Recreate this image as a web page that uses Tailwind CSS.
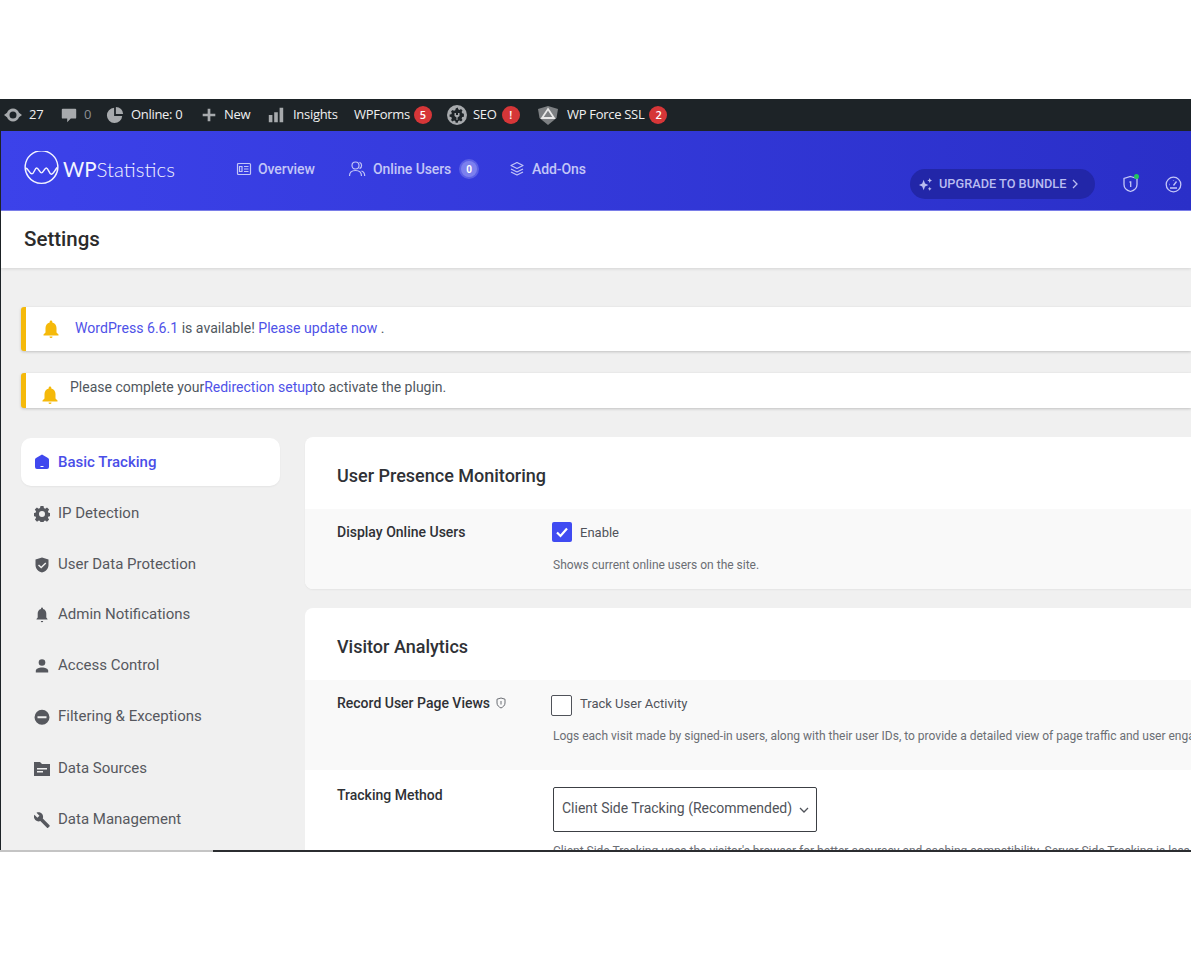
<!DOCTYPE html>
<html lang="en">
<head>
    <meta charset="UTF-8">
    <meta name="viewport" content="width=device-width, initial-scale=1.0">
    <title>WP Statistics - Settings</title>
    <script src="https://cdn.jsdelivr.net/npm/@tailwindcss/browser@4"></script>
</head>
<body class="bg-white h-[960px] overflow-hidden font-['Roboto',sans-serif]">

<div class="pt-[99px] w-[1191px]">
    <div class="h-[751px] overflow-hidden flex flex-col">

        <!-- Admin bar -->
        <div class="h-[32px] shrink-0 bg-[#1d2327] flex items-center text-[13px] text-[#f0f0f1] font-['Open_Sans',sans-serif] tracking-[-0.3px] whitespace-nowrap">
            <div class="flex items-center ml-[3px] w-[57px]">
                <svg class="w-[20px] h-[20px] text-[#a7aaad]" viewBox="0 0 20 20" fill="currentColor"><path fill-rule="evenodd" d="M10 3.500c2.800 0 5.100 1.700 6 4.200l3 2.300-3 2.300c-.9 2.500-3.200 4.200-6 4.200s-5.100-1.700-6-4.200L1 10l3-2.300c.9-2.500 3.200-4.200 6-4.200zm0 3a3.500 3.500 0 1 0 0 7 3.500 3.500 0 0 0 0-7z"/></svg>
                <span class="ml-[6px]">27</span>
            </div>
            <div class="flex items-center w-[46px]">
                <svg class="w-[18px] h-[18px] text-[#a7aaad]" viewBox="0 0 20 20" fill="currentColor"><path d="M3 3h14a1 1 0 0 1 1 1v9a1 1 0 0 1-1 1h-5l-4 4v-4H3a1 1 0 0 1-1-1V4a1 1 0 0 1 1-1z"/></svg>
                <span class="ml-[6px] text-[#8c8f94]">0</span>
            </div>
            <div class="flex items-center w-[94px]">
                <svg class="w-[18px] h-[18px] text-[#a7aaad]" viewBox="0 0 20 20" fill="currentColor"><path d="M9 2v9h9a8.500 8.500 0 1 1-9-9z"/><path d="M11 1a8 8 0 0 1 8 8h-8z"/></svg>
                <span class="ml-[7px]">Online: 0</span>
            </div>
            <div class="flex items-center w-[67px]">
                <svg class="w-[18px] h-[18px] text-[#a7aaad]" viewBox="0 0 20 20" fill="currentColor"><path d="M8.500 3h3v5.500H17v3h-5.500V17h-3v-5.500H3v-3h5.500z"/></svg>
                <span class="ml-[6px]">New</span>
            </div>
            <div class="flex items-center w-[87px]">
                <svg class="w-[18px] h-[18px] text-[#a7aaad]" viewBox="0 0 20 20" fill="currentColor"><path d="M2 10h4v8H2zM8 7h4v11H8zM14 2h4v16h-4z"/></svg>
                <span class="ml-[8px]">Insights</span>
            </div>
            <div class="flex items-center w-[93px]">
                <span>WPForms</span>
                <span class="ml-[4px] w-[18px] h-[18px] rounded-full bg-[#d63638] text-white text-[11px] font-semibold flex items-center justify-center">5</span>
            </div>
            <div class="flex items-center w-[90px]">
                <svg class="w-[20px] h-[20px] text-[#a7aaad]" viewBox="0 0 20 20" fill="currentColor"><path fill-rule="evenodd" d="M10 0a10 10 0 1 1 0 20 10 10 0 0 1 0-20zm-1.300 3.500-.4 1.700-1.300.6-1.500-.9-1.500 1.500.9 1.500-.6 1.300-1.700.4v2.100l1.700.4.6 1.300-.9 1.500 1.500 1.500 1.500-.9 1.300.6.4 1.700h2.100l.4-1.700 1.300-.6 1.500.9 1.500-1.500-.9-1.500.6-1.300 1.700-.4V8.700l-1.700-.4-.6-1.300.9-1.500-1.500-1.500-1.500.9-1.300-.6-.4-1.700zM7.500 8h1.500v2h2V8h1.500v3l-2 1.500V15h-1v-2.500l-2-1.500z"/></svg>
                <span class="ml-[6px]">SEO</span>
                <span class="ml-[5px] w-[18px] h-[18px] rounded-full bg-[#d63638] text-white text-[11px] font-semibold flex items-center justify-center">!</span>
            </div>
            <div class="flex items-center">
                <svg class="w-[22px] h-[22px]" viewBox="0 0 22 22"><path d="M1 5l10-3 10 3-1.500 9L11 21l-8.500-7z" fill="#7d8083"/><path d="M11 5l6 9H5z" fill="none" stroke="#e8e8e8" stroke-width="1.800"/></svg>
                <span class="ml-[8px]">WP Force SSL</span>
                <span class="ml-[5px] w-[18px] h-[18px] rounded-full bg-[#d63638] text-white text-[11px] font-semibold flex items-center justify-center">2</span>
            </div>
        </div>

        <div class="flex-1 flex flex-col border-l border-[#1d2327] min-h-0 bg-[#f0f0f0]">

            <!-- Plugin header -->
            <div class="h-[80px] shrink-0 bg-gradient-to-r from-[#3c42ea] to-[#2a2fc8] border-b border-[#7a7de8] relative flex text-[#c3c6f7]">
                <div class="flex items-center h-[76px] ml-[23px] w-[211px]">
                    <svg class="w-[35px] h-[35px] -mt-[1px]" viewBox="0 0 36 36" fill="none" stroke="#f3f4ff" stroke-width="1.500"><path d="M4.500 26.500A16.800 16.800 0 1 1 31.500 26.500M4.500 26.500A16.800 16.800 0 0 0 31.500 26.500"/><path d="M1.500 17.500c3 0 4 6 6.500 6s3-6 5-6 3 5 5 5 3-5 5-5 3 6.500 5 6.500 3-3 6-7"/></svg>
                    <span class="ml-[4px] text-[20.500px] font-['Lato',sans-serif] font-light text-[#f3f4ff] leading-none"><span class="font-normal">WP</span>Statistics</span>
                </div>
                <div class="flex items-center h-[76px] text-[14px] font-medium tracking-[-0.1px]">
                    <div class="flex items-center w-[113px]">
                        <svg class="w-[16px] h-[16px] ml-[1px]" viewBox="0 0 16 16" fill="none" stroke="currentColor" stroke-width="1.200"><rect x="1.500" y="2.500" width="13" height="11" rx="1"/><path d="M3.500 5.500h2.500v5H3.500zM8 5.500h4.500M8 8h4.500M8 10.500h4.500"/></svg>
                        <span class="ml-[6px]">Overview</span>
                    </div>
                    <div class="flex items-center w-[161px]">
                        <svg class="w-[18px] h-[18px]" viewBox="0 0 18 18" fill="none" stroke="currentColor" stroke-width="1.200"><circle cx="7.500" cy="5.500" r="3.500"/><path d="M1.500 16c0-3.500 2.500-5.500 6-5.500s6 2 6 5.500M11.500 2.200a3.500 3.500 0 0 1 0 6.400M13.500 11c2 .6 3.200 2.500 3.200 5"/></svg>
                        <span class="ml-[7px]">Online Users</span>
                        <span class="ml-[10px] w-[16px] h-[16px] rounded-full bg-[#7c80ee] ring-2 ring-[#5a5fe6] text-white text-[10px] font-bold flex items-center justify-center">0</span>
                    </div>
                    <div class="flex items-center">
                        <svg class="w-[16px] h-[16px]" viewBox="0 0 16 16" fill="none" stroke="currentColor" stroke-width="1.200" stroke-linejoin="round"><path d="M8 1.500l6 3-6 3-6-3zM2 8l6 3 6-3M2 11l6 3 6-3"/></svg>
                        <span class="ml-[7px]">Add-Ons</span>
                    </div>
                </div>
                <div class="ml-auto flex items-start pt-[38px] pr-[9px]">
                    <div class="w-[185px] h-[30px] rounded-full bg-[#2226a8] flex items-center pl-[8px] text-[12.750px] font-medium text-[#b9bcf0] whitespace-nowrap">
                        <svg class="w-[15px] h-[15px]" viewBox="0 0 16 16" fill="currentColor"><path d="M6 3l1.500 4L11 8.500 7.500 10 6 14l-1.500-4L1 8.500 4.500 7zM12.500 1l.8 2 1.700.8-1.700.7-.8 2-.8-2-1.700-.7 1.700-.8zM12.500 10.500l.7 1.500 1.300.6-1.300.6-.7 1.500-.7-1.500-1.300-.6 1.300-.6z"/></svg>
                        <span class="ml-[6px]">UPGRADE TO BUNDLE</span>
                        <svg class="w-[10px] h-[10px] ml-[4px]" viewBox="0 0 10 10" fill="none" stroke="currentColor" stroke-width="1.300"><path d="M3 1l4 4-4 4"/></svg>
                    </div>
                    <div class="relative ml-[27px] mt-[6px]">
                        <svg class="w-[17px] h-[18px] text-[#c3c6f7]" viewBox="0 0 17 18" fill="none" stroke="currentColor" stroke-width="1.300"><path d="M8.500 1.500L15 3.500v6c0 3.500-3 6-6.500 7-3.500-1-6.500-3.500-6.500-7v-6z"/><path d="M7.500 7h1.200v5"/></svg>
                        <span class="absolute -top-[1px] right-[0px] w-[5px] h-[5px] rounded-full bg-[#22c55e]"></span>
                    </div>
                    <svg class="ml-[26px] mt-[7px] w-[17px] h-[17px] text-[#c3c6f7]" viewBox="0 0 17 17" fill="none" stroke="currentColor" stroke-width="1.300"><circle cx="8.500" cy="8.500" r="7.300"/><path d="M8.500 9.500l3-4M4.500 8.500h.5M8.500 4.500v.5M12 12h-7"/></svg>
                </div>
            </div>

            <!-- Page title -->
            <div class="h-[57px] shrink-0 bg-white shadow-[0_1px_3px_rgba(0,0,0,0.12)] flex items-center pl-[23px] pb-[1px] text-[20.500px] font-medium text-[#2b2b2b]">Settings</div>

            <!-- Notices -->
            <div class="pl-[20px] pt-[39px] shrink-0 text-[14px] text-[#50575e]">
                <div class="h-[44px] bg-white border-l-[5px] border-[#f5b90a] rounded-l-[3px] shadow-[0_1px_3px_rgba(0,0,0,0.2)] flex items-center">
                    <svg class="w-[20px] h-[20px] ml-[15px]" viewBox="0 0 20 20" fill="#f5b90a"><path d="M10 1.500a1.300 1.300 0 0 1 1.300 1.300v.6C14 4 15.500 6.300 15.500 9v4.500l2 2v1h-15v-1l2-2V9c0-2.700 1.500-5 4.200-5.600v-.6A1.300 1.300 0 0 1 10 1.500zM8.500 17.500h3a1.500 1.500 0 0 1-3 0z"/></svg>
                    <div class="ml-[14px] pb-[1px] text-[14.100px]"><span class="text-[#4f52e8]">WordPress 6.6.1</span> is available! <span class="text-[#4f52e8]">Please update now</span> .</div>
                </div>
                <div class="h-[35px] mt-[22px] bg-white border-l-[5px] border-[#f5b90a] rounded-l-[3px] shadow-[0_1px_3px_rgba(0,0,0,0.2)] flex">
                    <svg class="w-[20px] h-[20px] ml-[14px] mt-[12px]" viewBox="0 0 20 20" fill="#f5b90a"><path d="M10 1.500a1.300 1.300 0 0 1 1.300 1.300v.6C14 4 15.500 6.300 15.500 9v4.500l2 2v1h-15v-1l2-2V9c0-2.700 1.500-5 4.200-5.600v-.6A1.300 1.300 0 0 1 10 1.500zM8.500 17.500h3a1.500 1.500 0 0 1-3 0z"/></svg>
                    <div class="ml-[10px] mt-[4px]">Please complete your<span class="text-[#4f52e8]">Redirection setup</span>to activate the plugin.</div>
                </div>
            </div>

            <!-- Settings body -->
            <div class="flex pl-[20px] pt-[29px] min-h-0 flex-1">
                <div class="w-[259px] shrink-0 text-[15px] font-normal text-[#56585e]">
                    <div class="h-[48px] rounded-[10px] bg-white shadow-[0_1px_2px_rgba(0,0,0,0.05)] flex items-center pl-[13px] text-[#4a4ee8] font-medium mt-[1px]">
                        <svg class="w-[16px] h-[16px]" viewBox="0 0 16 16" fill="#4048ee"><path d="M8 .5l6 3.500a2 2 0 0 1 1 1.700V13a2 2 0 0 1-2 2H3a2 2 0 0 1-2-2V5.700A2 2 0 0 1 2 4zM6.500 12v1h3v-1z" fill-rule="evenodd"/></svg>
                        <span class="ml-[8px]">Basic Tracking</span>
                    </div>
                    <div class="h-[51px] flex items-center pl-[13px] mt-[2px]">
                        <svg class="w-[16px] h-[16px]" viewBox="0 0 16 16" fill="#56585e"><path fill-rule="evenodd" d="M6.500 0h3l.4 2.100 1.300.6 1.800-1.200 2.100 2.100-1.200 1.800.6 1.300 2 .4v3l-2 .4-.6 1.300 1.200 1.800-2.100 2.100-1.800-1.200-1.300.6-.4 2h-3l-.4-2-1.300-.6-1.800 1.200-2.100-2.100 1.200-1.800-.6-1.300-2-.4v-3l2-.4.6-1.300L.8 3.600l2.100-2.100 1.800 1.200 1.300-.6zM8 5a3 3 0 1 0 0 6 3 3 0 0 0 0-6z"/></svg>
                        <span class="ml-[8px]">IP Detection</span>
                    </div>
                    <div class="h-[51px] flex items-center pl-[13px]">
                        <svg class="w-[16px] h-[16px]" viewBox="0 0 16 16" fill="#56585e"><path fill-rule="evenodd" d="M8 .5l6.500 2v5.500c0 3.600-2.700 6.500-6.500 7.500C4.200 14.500 1.500 11.600 1.500 8V2.500zM11.300 5.500L7.200 9.500 5 7.500 4 8.500l3.200 3 5.100-5z"/></svg>
                        <span class="ml-[8px]">User Data Protection</span>
                    </div>
                    <div class="h-[51px] flex items-center pl-[13px] -mt-[1px]">
                        <svg class="w-[16px] h-[16px]" viewBox="0 0 16 16" fill="#56585e"><path d="M8 .5a1 1 0 0 1 1 1v.4c2.200.5 3.300 2.300 3.300 4.600v4l1.200 1.500v.5h-11V12l1.200-1.500v-4c0-2.300 1.100-4.100 3.300-4.600v-.4a1 1 0 0 1 1-1zM6.800 14h2.400a1.200 1.200 0 0 1-2.400 0z"/></svg>
                        <span class="ml-[8px]">Admin Notifications</span>
                    </div>
                    <div class="h-[51px] flex items-center pl-[13px]">
                        <svg class="w-[16px] h-[16px]" viewBox="0 0 16 16" fill="#56585e"><circle cx="8" cy="4.500" r="3.300"/><path d="M1.800 14.500v-1.700c0-2 3-3.300 6.200-3.300s6.200 1.300 6.200 3.300v1.700z"/></svg>
                        <span class="ml-[8px]">Access Control</span>
                    </div>
                    <div class="h-[51px] flex items-center pl-[13px]">
                        <svg class="w-[16px] h-[16px]" viewBox="0 0 16 16" fill="#56585e"><path fill-rule="evenodd" d="M8 .7a7.500 7.500 0 1 1 0 15 7.500 7.500 0 0 1 0-15zM3.500 7.200v2h9v-2z"/></svg>
                        <span class="ml-[8px]">Filtering &amp; Exceptions</span>
                    </div>
                    <div class="h-[51px] flex items-center pl-[12px] mt-[1px]">
                        <svg class="w-[18px] h-[16px]" viewBox="0 0 18 16" fill="#56585e"><path fill-rule="evenodd" d="M1 1h6l2 2h8v12H1zM4 7v1.500h10V7zM4 10v1.500h6V10z"/></svg>
                        <span class="ml-[7px]">Data Sources</span>
                    </div>
                    <div class="h-[51px] flex items-center pl-[13px]">
                        <svg class="w-[16px] h-[16px]" viewBox="0 0 16 16" fill="#56585e"><path d="M15.500 13.300L8.800 6.600c.6-1.700.3-3.600-1.100-5C6.300.2 4.200-.1 2.500.7l3 3-2.100 2.100-3-3c-.9 1.700-.5 3.800.9 5.200 1.400 1.400 3.300 1.700 5 1.100l6.700 6.700c.3.300.8.300 1.100 0l1.400-1.400c.3-.3.3-.8 0-1.100z"/></svg>
                        <span class="ml-[8px]">Data Management</span>
                    </div>
                </div>

                <!-- Setting cards -->
                <div class="ml-[25px] flex-1 min-w-0 -mr-[20px]">
                    <div class="bg-white rounded-[8px] overflow-hidden shadow-[0_1px_2px_rgba(0,0,0,0.05)]">
                        <div class="h-[72px] flex items-center pl-[32px] pt-[4px] text-[18px] font-medium text-[#2f3136]">User Presence Monitoring</div>
                        <div class="h-[80px] bg-[#f9f9f9] flex pl-[32px] text-[14px]">
                            <div class="w-[215px] shrink-0 pt-[13px] font-medium text-[#2f3136]">Display Online Users</div>
                            <div>
                                <div class="flex items-center pt-[13px]">
                                    <span class="w-[20px] h-[20px] rounded-[2px] bg-[#404bf2] flex items-center justify-center">
                                        <svg class="w-[14px] h-[14px]" viewBox="0 0 14 14" fill="none" stroke="white" stroke-width="2.200"><path d="M2 7.500l3.500 3.500L12 3.500"/></svg>
                                    </span>
                                    <span class="ml-[8px] pt-[1px] text-[13px] text-[#50535a]">Enable</span>
                                </div>
                                <div class="mt-[13px] ml-[1px] text-[12px] text-[#6b6e74]">Shows current online users on the site.</div>
                            </div>
                        </div>
                    </div>
                    <div class="mt-[19px] bg-white rounded-t-[8px]">
                        <div class="h-[72px] flex items-center pl-[32px] pt-[4px] text-[18px] font-medium text-[#2f3136]">Visitor Analytics</div>
                        <div class="h-[90px] bg-[#f9f9f9] flex pl-[32px] text-[14px] whitespace-nowrap overflow-hidden">
                            <div class="w-[215px] shrink-0 pt-[13px] font-medium text-[#2f3136] flex items-start">
                                <span>Record User Page Views</span>
                                <svg class="w-[12px] h-[12px] ml-[5px] mt-[4px]" viewBox="0 0 12 12" fill="none" stroke="#6b6e74"><path d="M6 1l4 1.200v3.800c0 2.500-2 4-4 5-2-1-4-2.500-4-5V2.200z"/><path d="M6 4v3.500"/></svg>
                            </div>
                            <div>
                                <div class="flex items-center pt-[14px] -ml-[1px]">
                                    <span class="w-[21px] h-[21px] rounded-[2px] bg-white border border-[#50535a]"></span>
                                    <span class="ml-[8px] text-[13px] text-[#50535a] pb-[3px]">Track User Activity</span>
                                </div>
                                <div class="mt-[10px] ml-[1px] text-[12px] text-[#6b6e74]">Logs each visit made by signed-in users, along with their user IDs, to provide a detailed view of page traffic and user engagement.</div>
                            </div>
                        </div>
                        <div class="flex pl-[32px] text-[14px] whitespace-nowrap overflow-hidden">
                            <div class="w-[215px] shrink-0 pt-[15px] font-medium text-[#2f3136]">Tracking Method</div>
                            <div>
                                <div class="mt-[17px] ml-[1px] w-[264px] h-[45px] rounded-[2px] border border-[#3c3f44] flex items-center pl-[8px] pb-[2px] text-[14px] text-[#50535a]">
                                    <span>Client Side Tracking (Recommended)</span>
                                    <svg class="w-[12px] h-[12px] ml-[6px] mt-[2px]" viewBox="0 0 12 12" fill="none" stroke="#50535a" stroke-width="1.300"><path d="M2 4l4 4 4-4"/></svg>
                                </div>
                                <div class="mt-[10px] ml-[1px] text-[12px] text-[#6b6e74]">Client Side Tracking uses the visitor's browser for better accuracy and caching compatibility. Server Side Tracking is less accurate.</div>
                            </div>
                        </div>
                    </div>
                </div>
            </div>
        </div>
    </div>
    <!-- Bottom edge of the captured window -->
    <div class="flex h-[2px]">
        <div class="w-[213px] bg-[#c4c4c4]"></div>
        <div class="flex-1 bg-[#2b2d30]"></div>
    </div>
</div>

</body>
</html>
